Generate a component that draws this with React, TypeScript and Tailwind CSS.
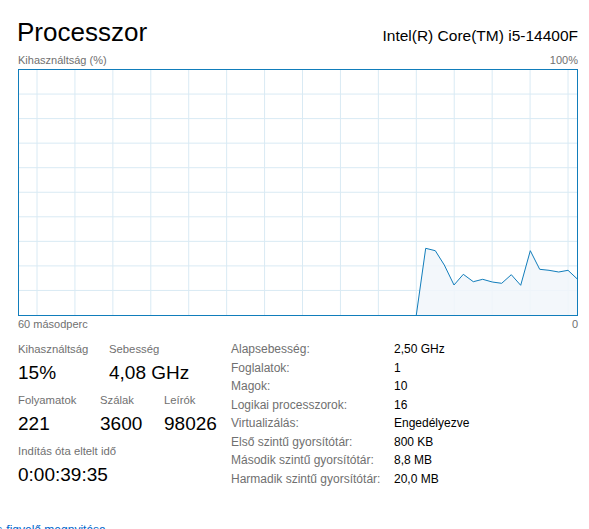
import React from "react";

const font = { fontFamily: '"Liberation Sans", Arial, sans-serif' };

const gridX = Array.from({ length: 15 }, (_, k) => 18 + k * 37.93);
const gridY = Array.from({ length: 9 }, (_, k) => (k + 1) * 24.55 - 0.5);

const samples: [number, number][] = [
  [397.3, 245],
  [406.7, 178.3],
  [416.3, 180.7],
  [425.3, 195],
  [435, 215],
  [444.3, 204.3],
  [454.3, 211.7],
  [463.7, 209.3],
  [473.3, 212],
  [482.7, 213.3],
  [492.3, 204.7],
  [501.7, 215.3],
  [511.3, 180.7],
  [520.7, 199.3],
  [530, 200.3],
  [539.7, 202],
  [549, 200.3],
  [558.3, 209],
];

function Chart() {
  const line = samples.map(([x, y]) => `${x},${y}`).join(" ");
  const area = `${line} 558.3,245`;
  return (
    <div className="h-[247px] w-[560px] border border-[#117dbb] bg-white">
      <svg width="558" height="245" viewBox="0 0 558 245" className="block">
        {gridX.map((x) => (
          <line key={"x" + x} x1={x} y1={0} x2={x} y2={245} stroke="#d9eaf4" strokeWidth={1} />
        ))}
        {gridY.map((y) => (
          <line key={"y" + y} x1={0} y1={y} x2={558} y2={y} stroke="#d9eaf4" strokeWidth={1} />
        ))}
        <polygon points={area} fill="#f1f6fa" fillOpacity={0.85} />
        <polyline points={line} fill="none" stroke="#117dbb" strokeWidth={1} strokeLinejoin="round" />
      </svg>
    </div>
  );
}

function Stat({ label, value, width }: { label: string; value: string; width: string }) {
  return (
    <div className={width}>
      <div className="text-[11.3px] leading-4 text-[#707070]">{label}</div>
      <div className="mt-[3px] text-[19px] leading-[26px] text-black">{value}</div>
    </div>
  );
}

const details: [string, string][] = [
  ["Alapsebesség:", "2,50 GHz"],
  ["Foglalatok:", "1"],
  ["Magok:", "10"],
  ["Logikai processzorok:", "16"],
  ["Virtualizálás:", "Engedélyezve"],
  ["Első szintű gyorsítótár:", "800 KB"],
  ["Második szintű gyorsítótár:", "8,8 MB"],
  ["Harmadik szintű gyorsítótár:", "20,0 MB"],
];

export default function App() {
  return (
    <div className="h-[529px] w-[589px] overflow-hidden bg-white" style={font}>
      <div className="pl-[18px] pr-[11px]">
        {/* Header */}
        <div className="flex items-baseline justify-between pt-[16px]">
          <h1 className="-ml-[1px] text-[26px] leading-8 text-black">Processzor</h1>
          <span className="text-[15.5px] text-black">Intel(R) Core(TM) i5-14400F</span>
        </div>

        <div className="mt-[4px] flex justify-between text-[11px] leading-4 text-[#707070]">
          <span>Kihasználtság (%)</span>
          <span>100%</span>
        </div>

        <div className="mt-[1px]">
          <Chart />
        </div>

        <div className="flex justify-between text-[11px] leading-4 text-[#707070]">
          <span>60 másodperc</span>
          <span>0</span>
        </div>

        {/* Stats */}
        <div className="mt-[9px] flex">
          <div className="w-[213px]">
            <div className="flex">
              <Stat label="Kihasználtság" value="15%" width="w-[91px]" />
              <Stat label="Sebesség" value="4,08 GHz" width="w-[100px]" />
            </div>
            <div className="mt-[6px] flex">
              <Stat label="Folyamatok" value="221" width="w-[82px]" />
              <Stat label="Szálak" value="3600" width="w-[64px]" />
              <Stat label="Leírók" value="98026" width="w-[60px]" />
            </div>
            <div className="mt-[6px]">
              <Stat label="Indítás óta eltelt idő" value="0:00:39:35" width="w-full" />
            </div>
          </div>

          <div className="-mt-[1px] grid grid-cols-[163px_auto] text-[12px] leading-[18.3px]">
            {details.map(([k, v]) => (
              <React.Fragment key={k}>
                <span className="text-[#707070]">{k}</span>
                <span className="text-black">{v}</span>
              </React.Fragment>
            ))}
          </div>
        </div>
      </div>

      <div className="mt-[34px] -ml-[47px] text-[12px] leading-4 text-[#0066cc]">
        Erőforrás-figyelő megnyitása
      </div>
    </div>
  );
}
